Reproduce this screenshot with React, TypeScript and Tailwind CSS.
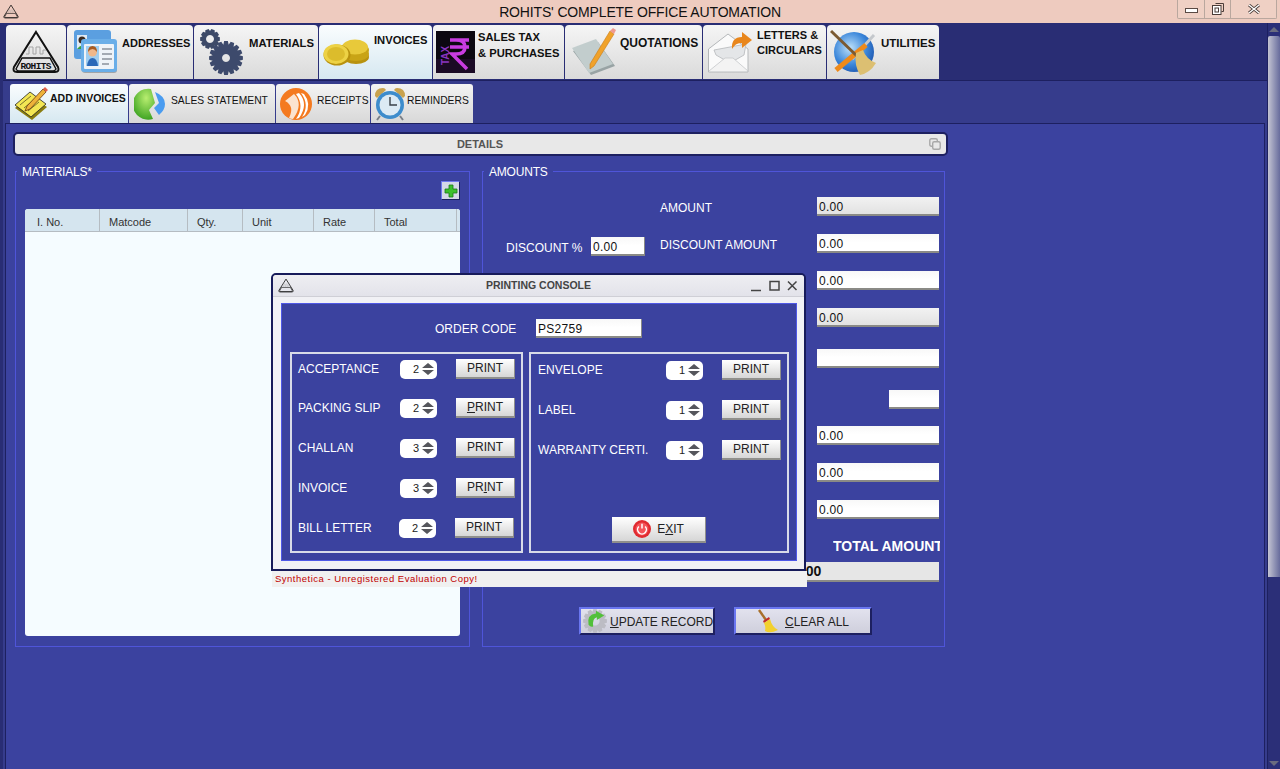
import React from 'react';

// builds a toothed gear outline for the tab and button icons
function gearPath(cx: number, cy: number, r: number, teeth: number) {
  const pts: string[] = [];
  const inner = r * 0.8;
  const step = (Math.PI * 2) / teeth;
  for (let i = 0; i < teeth; i++) {
    const a = i * step;
    [[inner, -0.5], [r, -0.28], [r, 0.28], [inner, 0.5]].forEach(([rad, off]) => {
      const t = a + off * step;
      pts.push(`${(cx + Math.cos(t) * rad).toFixed(2)} ${(cy + Math.sin(t) * rad).toFixed(2)}`);
    });
  }
  return `M${pts.join('L')}Z`;
}

function LogoIcon({ small }: { small?: boolean }) {
  return (
    <svg viewBox="0 0 50 44" className={small ? 'w-[16px] h-[15px]' : 'w-[50px] h-[44px]'}>
      <path d="M25 2 L47 37 Q49 42 44 42 L6 42 Q1 42 3 37 Z" fill="none" stroke="#111" strokeWidth={small ? 2.5 : 2} />
      <path d="M15 24 h3 v-7 h4 v7 h3 v-7 h4 v7 h3 v-4 h3" fill="none" stroke="#a5a5a5" strokeWidth="1" />
      <path d="M11 28 H39 L45 39 Q44 41 42 41 H8 Q6 41 5 39 Z" fill="none" stroke="#111" strokeWidth={small ? 2 : 1.4} />
      {!small && <text x="25" y="38.500" textAnchor="middle" fontSize="9.500" fontWeight="bold" fill="#111" fontFamily="Liberation Mono" textLength="31">ROHITS</text>}
    </svg>
  );
}

function AddressIcon() {
  return (
    <svg viewBox="0 0 44 44" className="w-[44px] h-[44px] shrink-0">
      <rect x="1" y="0" width="37" height="29" rx="3" fill="#5b9fe0" />
      <rect x="4" y="5" width="10" height="14" fill="#dfeaf5" />
      <circle cx="9" cy="10" r="3.500" fill="#3a2a20" />
      <path d="M4 19 q5 -7 10 0z" fill="#3aa040" />
      <rect x="9" y="11" width="35" height="32" rx="3" fill="#5a5f66" opacity=".45" />
      <rect x="8" y="9" width="36" height="33" rx="3" fill="#6aaee8" />
      <rect x="11" y="14" width="30" height="25" rx="1" fill="#eef3f8" />
      <rect x="13" y="16" width="13" height="20" fill="#9fcdf0" />
      <circle cx="19.500" cy="22" r="4.500" fill="#f0b78a" />
      <path d="M15 22 q0 -6 4.500 -6 q4.500 0 4.500 6 q-2 -3 -4.500 -3 q-2.500 0 -4.500 3z" fill="#a85a20" />
      <path d="M14 36 q1 -8 5.500 -8 q4.500 0 5.500 8z" fill="#2a68b8" />
      <path d="M29 19h10M29 24h10M29 29h10M29 34h7" stroke="#8a939c" strokeWidth="1.400" />
    </svg>
  );
}

function GearsIcon() {
  return (
    <svg viewBox="0 0 44 46" className="w-[44px] h-[46px] shrink-0">
      <path fillRule="evenodd" d={`${gearPath(11, 10, 10, 10)} M11 6a4 4 0 1 0 .01 0Z`} fill="#3d4a68" />
      <path fillRule="evenodd" d={`${gearPath(27, 29, 17, 16)} M27 25a4 4 0 1 0 .01 0Z`} fill="#3d4a6c" />
    </svg>
  );
}

function CoinsIcon() {
  return (
    <svg viewBox="0 0 47 28" className="w-[47px] h-[28px] mt-[2px] shrink-0">
      <ellipse cx="33" cy="18" rx="13" ry="7" fill="#b8920f" />
      <ellipse cx="33" cy="15" rx="13" ry="7" fill="#c9a416" />
      <ellipse cx="33" cy="11" rx="13" ry="7" fill="#c9a416" />
      <ellipse cx="32" cy="8" rx="13" ry="7.500" fill="#e8c93a" />
      <ellipse cx="14" cy="16" rx="13.500" ry="10.500" fill="#b8920f" />
      <ellipse cx="13" cy="15" rx="12.500" ry="10" fill="#edd245" />
      <ellipse cx="13" cy="15" rx="9" ry="7" fill="#dcbc2c" />
    </svg>
  );
}

function TaxIcon() {
  return (
    <svg viewBox="0 0 39 42" className="w-[39px] h-[42px] shrink-0">
      <rect width="39" height="42" fill="#0c0810" />
      <rect y="28" width="39" height="14" fill="#1b0a25" />
      <path d="M14 9h19M14 16h19M16 9h4q9 0 9 7t-9 7h-4l15 15" fill="none" stroke="#c83ce0" strokeWidth="3.500" />
      <text x="0" y="0" transform="translate(13 34) rotate(-90)" fontSize="10" fill="#8a34c0" fontFamily="Liberation Sans">TAX</text>
    </svg>
  );
}

function QuoteIcon() {
  return (
    <svg viewBox="0 0 44 48" className="w-[44px] h-[48px] shrink-0">
      <path d="M1 23 L26 14 L43 38 L19 47 Z" fill="#98a3a4" />
      <path d="M0 20 L24 11 L41 36 L17 45 Z" fill="#c2cdcd" />
      <path d="M38 3 L18 36 L18 41 L22 38 L42 6 Z" fill="#f0a22a" stroke="#c97b14" strokeWidth=".6" />
      <path d="M38 3 L41 0 L44 2 L42 6 Z" fill="#f09a90" />
    </svg>
  );
}

function LetterIcon() {
  return (
    <svg viewBox="0 0 44 42" className="w-[44px] h-[42px] shrink-0">
      <path d="M0.500 18 L20 3 L40 18 V41 H0.500 Z" fill="#fafafa" stroke="#b5b8ba" />
      <path d="M6 19 L38 13 L36 24 L22 32 L8 24 Z" fill="#e4e6e8" stroke="#b5b8ba" strokeWidth=".8" />
      <path d="M1 40 L17 27 H25 L40 40" fill="#f3f3f3" stroke="#c5c8ca" strokeWidth=".8" />
      <path d="M24 18 Q23 6 34 6 V1 L44 9 L34 17 V12 Q28 11 24 18 Z" fill="#e8861c" />
    </svg>
  );
}

function UtilitiesIcon() {
  return (
    <svg viewBox="0 0 48 46" className="w-[48px] h-[46px] shrink-0">
      <defs>
        <radialGradient id="globe" cx=".4" cy=".4" r=".7">
          <stop offset="0" stopColor="#bfe2fa" />
          <stop offset=".6" stopColor="#3a86da" />
          <stop offset="1" stopColor="#1a4fa8" />
        </radialGradient>
      </defs>
      <circle cx="24" cy="23" r="20" fill="url(#globe)" />
      <path d="M44 6 L22 30" stroke="#c4c8cc" strokeWidth="3" />
      <path d="M6 41 L36 16" stroke="#ee8a1a" strokeWidth="5" />
      <path d="M1 2 L28 28" stroke="#7b5a32" strokeWidth="3" />
      <path d="M26 24 L33 21 Q36 30 46 34 Q40 44 30 46 Q24 36 26 24 Z" fill="#dcbf72" />
    </svg>
  );
}

function NoteIcon() {
  return (
    <svg viewBox="0 0 34 34" className="w-[34px] h-[34px] shrink-0">
      <path d="M1 21 L16 8 L33 20 L18 33 Z" fill="#8a7d10" />
      <path d="M1 18 L16 5 L32 17 L17 30 Z" fill="#f3e654" stroke="#222" strokeWidth=".8" />
      <path d="M6 18 L17 9M10 21 L21 12M14 24 L25 15" stroke="#5a5320" strokeWidth=".8" />
      <path d="M29 2 L13 19 L11 24 L16 22 L32 5 Z" fill="#eeb23a" stroke="#6a3a10" strokeWidth=".8" />
      <path d="M29 2 L31 0 L34 3 L32 5 Z" fill="#e0604a" />
    </svg>
  );
}

function PieIcon() {
  return (
    <svg viewBox="0 0 32 34" className="w-[32px] h-[34px] shrink-0">
      <defs>
        <radialGradient id="pie" cx=".6" cy=".3" r=".8">
          <stop offset="0" stopColor="#b8ee70" />
          <stop offset="1" stopColor="#2f9a18" />
        </radialGradient>
      </defs>
      <path d="M17 2 A15.500 15.500 0 1 0 19 32 L15 23 L21 16 Z" fill="url(#pie)" />
      <path d="M21 5 Q31 9 31 17 Q31 23 25 28 L20 21 L25 16 Z" fill="#4a9cf0" />
    </svg>
  );
}

function ReceiptIcon() {
  return (
    <svg viewBox="0 0 32 32" className="w-[32px] h-[32px] shrink-0">
      <circle cx="16" cy="16" r="16" fill="#f47a20" />
      <path d="M5 13 L14 6 Q24 16 13 31 Q11 31 9 30 Q15 18 5 13Z" fill="#fbe3cf" />
      <path d="M16 6 L19 5 Q29 16 19 30 L16 31 Q25 18 16 6Z" fill="#fff" />
      <path d="M21 5 L24 6 Q32 16 25 27 L22 29 Q30 17 21 5Z" fill="#fff" />
    </svg>
  );
}

function ClockIcon() {
  return (
    <svg viewBox="0 0 32 34" className="w-[32px] h-[34px] shrink-0">
      <path d="M1 9 Q1 1 9 1 Q11 1 12 3 L3 11 Z" fill="#c9a24e" />
      <path d="M31 9 Q31 1 23 1 Q21 1 20 3 L29 11 Z" fill="#c9a24e" />
      <path d="M6 29 L3 33M26 29 L29 33" stroke="#7a8088" strokeWidth="2" />
      <circle cx="16" cy="18" r="14" fill="#3d8ccc" />
      <circle cx="16" cy="18" r="10.500" fill="#dceaf4" />
      <path d="M16 10 V18 H23" fill="none" stroke="#3a4048" strokeWidth="1.400" />
    </svg>
  );
}

function PlusIcon() {
  return (
    <svg viewBox="0 0 14 14" className="w-[14px] h-[14px]">
      <path d="M5 1h4v4h4v4H9v4H5V9H1V5h4z" fill="#3cc02c" stroke="#1a7a18" strokeWidth=".8" />
    </svg>
  );
}

function RefreshGearIcon() {
  return (
    <svg viewBox="0 0 26 26" className="w-[24px] h-[24px] shrink-0">
      <path fillRule="evenodd" d={`${gearPath(13, 13, 13, 12)} M13 8a5 5 0 1 0 .01 0Z`} fill="#bcbcc4" />
      <path d="M6 17 Q4 6 14 5 V2 L23 7 L15 12 V9 Q10 10 11 19 Q8 20 6 17Z" fill="#52c03a" />
    </svg>
  );
}

function BroomIcon() {
  return (
    <svg viewBox="0 0 20 24" className="w-[20px] h-[24px] shrink-0">
      <path d="M1 1 L8 11" stroke="#a8702c" strokeWidth="2.400" />
      <path d="M5 12 L11 8 L12 10 L6 14 Z" fill="#c02a2a" />
      <path d="M6 14 L12 10 Q14 18 20 21 Q12 25 7 22 Q8 18 6 14Z" fill="#f2d02e" />
    </svg>
  );
}

function PowerIcon() {
  return (
    <svg viewBox="0 0 18 18" className="w-[18px] h-[18px]">
      <circle cx="9" cy="9" r="9" fill="#e02a30" />
      <circle cx="9" cy="9" r="6.500" fill="#f4545a" />
      <path d="M5.800 6.500 A4.400 4.400 0 1 0 12.200 6.500" fill="none" stroke="#fff" strokeWidth="1.500" />
      <path d="M9 3.800 V8.500" stroke="#fff" strokeWidth="1.500" />
    </svg>
  );
}

function WindowControls() {
  return (
    <div className="flex h-[19px] mr-[3px] border border-t-0 border-[#b9a79e] rounded-b-[2px] bg-[#efd0c4]">
      <div className="w-[27px] flex items-center justify-center border-r border-[#b9a79e]">
        <div className="w-[13px] h-[5px] mt-[3px] bg-white border border-[#5a4a44]" />
      </div>
      <div className="w-[26px] flex items-center justify-center border-r border-[#b9a79e]">
        <svg viewBox="0 0 12 12" className="w-[12px] h-[12px]">
          <path d="M3.500 .5h8v8h-2" fill="none" stroke="#4a3c38" />
          <rect x=".5" y="2.500" width="8.500" height="9" fill="#fff" stroke="#4a3c38" />
          <rect x="3" y="5" width="3.500" height="4" fill="none" stroke="#4a3c38" />
        </svg>
      </div>
      <div className="w-[45px] flex items-center justify-center">
        <svg viewBox="0 0 12 10" className="w-[12px] h-[10px]">
          <path d="M1 1 L11 9M11 1 L1 9" stroke="#4a3c38" strokeWidth="3" />
          <path d="M1 1 L11 9M11 1 L1 9" stroke="#fff" strokeWidth="1.400" />
        </svg>
      </div>
    </div>
  );
}

function MainTab({ className, active, children }: { className: string; active?: boolean; children: React.ReactNode }) {
  return (
    <div
      className={`${className} h-[54px] shrink-0 flex items-center rounded-t-[4px] font-bold text-[#111] leading-[16px] whitespace-nowrap ${
        active ? 'bg-gradient-to-b from-[#fafdfe] to-[#d6e8f1]' : 'bg-gradient-to-b from-[#f5f5f5] to-[#dadada]'
      }`}
    >
      {children}
    </div>
  );
}

function SubTab({ className, active, children }: { className: string; active?: boolean; children: React.ReactNode }) {
  return (
    <div
      className={`${className} h-[39px] shrink-0 flex items-center rounded-t-[3px] text-[#111] whitespace-nowrap ${
        active ? 'text-[10.500px] font-bold bg-gradient-to-b from-[#fafdfe] to-[#d6e8f1]' : 'text-[10.300px] bg-gradient-to-b from-[#f3f3f3] to-[#d8d8d8]'
      }`}
    >
      {children}
    </div>
  );
}

function Field({ value, readOnly, className }: { value?: string; readOnly?: boolean; className: string }) {
  return (
    <div
      className={`${className} h-[19px] pl-[2px] border-b-2 border-[#8a8a86] text-[12px] leading-[20px] tracking-[0.3px] text-[#111] shrink-0 ${
        readOnly ? 'bg-gradient-to-b from-[#f2f2f2] to-[#e2e2e2]' : 'bg-gradient-to-b from-[#f8f8f8] via-white to-white'
      }`}
    >
      {value}
    </div>
  );
}

function Spinner({ value, className }: { value: number; className?: string }) {
  return (
    <div className={`${className ?? ''} w-[37px] h-[19px] shrink-0 flex items-center justify-end pr-[3px] gap-[3px] bg-white rounded-[5px] text-[11px] text-[#222]`}>
      <span>{value}</span>
      <svg viewBox="0 0 12 14" className="w-[12px] h-[14px]">
        <path d="M6 1 L12 6 H0 Z M0 8 H12 L6 13 Z" fill="#55565c" />
      </svg>
    </div>
  );
}

function PrintButton({ under, className }: { under?: number; className?: string }) {
  const word = 'PRINT';
  return (
    <div className={`${className ?? ''} w-[59px] h-[20px] shrink-0 flex items-center justify-center bg-gradient-to-b from-white to-[#d6d6d6] border-b-2 border-r border-[#8f8f8c] text-[12px] text-[#222]`}>
      {word.split('').map((c, i) => (
        <span key={i} className={i === under ? 'underline' : ''}>{c}</span>
      ))}
    </div>
  );
}

function ConsoleRow({ label, value, under, className, labelClass, shift }: {
  label: string; value: number; under?: number; className?: string; labelClass: string; shift?: boolean;
}) {
  return (
    <div className={`${className ?? ''} h-[20px] flex items-center`}>
      <span className={`${labelClass} shrink-0 whitespace-nowrap text-[12px] text-white`}>{label}</span>
      <Spinner value={value} className={shift ? '-ml-[1px]' : ''} />
      <PrintButton under={under} className="ml-[19px]" />
    </div>
  );
}

function PrintingConsole() {
  return (
    <div className="absolute left-[271px] top-[273px] w-[536px]">
      <div className="w-[535px] h-[298px] flex flex-col border-2 border-[#171b5a] rounded-t-[5px] bg-[#f1f1f5]">
        <div className="h-[22px] shrink-0 flex items-center bg-gradient-to-b from-[#eeeef2] to-[#e3e3ea] border-b border-[#cfcfd6] rounded-t-[4px] pl-[5px] pr-[2px]">
          <LogoIcon small />
          <span className="flex-1 pl-[33px] text-center text-[10.500px] font-bold text-[#444]">PRINTING CONSOLE</span>
          <svg viewBox="0 0 52 12" className="w-[52px] h-[12px]">
            <path d="M1 10.500h10" stroke="#444" strokeWidth="1.500" />
            <rect x="20" y="1.500" width="9" height="8.500" fill="none" stroke="#444" strokeWidth="1.500" />
            <path d="M38 1.500l8.500 8.500M46.500 1.500L38 10" stroke="#444" strokeWidth="1.500" />
          </svg>
        </div>
        <div className="mt-[6px] ml-[8px] w-[516px] h-[258px] bg-[#3b429f] border border-[#4f58e6] flex flex-col pl-[8px]">
          <div className="mt-[15px] flex items-center">
            <span className="ml-[145px] w-[101px] text-[12px] text-white">ORDER CODE</span>
            <Field value="PS2759" className="w-[106px] border-r border-r-[#8a8a86]" />
          </div>
          <div className="mt-[14px] flex gap-[6px]">
            <div className="w-[233px] h-[201px] border-2 border-[#d8dbe8] pt-[5px] pl-[6px] flex flex-col">
              <ConsoleRow label="ACCEPTANCE" value={2} labelClass="w-[102px]" />
              <ConsoleRow label="PACKING SLIP" value={2} under={0} labelClass="w-[102px]" className="mt-[19px]" />
              <ConsoleRow label="CHALLAN" value={3} labelClass="w-[102px]" className="mt-[20px]" />
              <ConsoleRow label="INVOICE" value={3} under={2} labelClass="w-[102px]" className="mt-[20px]" />
              <ConsoleRow label="BILL LETTER" value={2} labelClass="w-[102px]" className="mt-[20px]" shift />
            </div>
            <div className="w-[260px] h-[201px] border-2 border-[#d8dbe8] pt-[6px] pl-[7px] flex flex-col">
              <ConsoleRow label="ENVELOPE" value={1} labelClass="w-[128px]" />
              <ConsoleRow label="LABEL" value={1} labelClass="w-[128px]" className="mt-[20px]" />
              <ConsoleRow label="WARRANTY CERTI." value={1} labelClass="w-[128px]" className="mt-[20px]" />
              <div className="mt-[57px] ml-[74px] w-[94px] h-[26px] flex items-center justify-center gap-[6px] bg-gradient-to-b from-white to-[#d6d6d6] border-b-2 border-r border-[#8f8f8c] text-[12px] text-[#222]">
                <PowerIcon />
                <span><span>E</span><span className="underline">X</span><span>IT</span></span>
              </div>
            </div>
          </div>
        </div>
      </div>
      <div className="ml-[1px] h-[16px] bg-[#f0f0f0] pl-[3px] text-[9.500px] leading-[15px] tracking-[0.5px] text-[#c00000]">
        Synthetica - Unregistered Evaluation Copy!
      </div>
    </div>
  );
}

function AmountRow({ label, left, value, readOnly, fieldClass, className }: {
  label?: string; left?: boolean; value?: string; readOnly?: boolean; fieldClass?: string; className?: string;
}) {
  return (
    <div className={`${className ?? ''} flex h-[19px]`}>
      <div className="w-[177px] shrink-0 flex items-start">
        {left && (
          <>
            <span className="ml-[23px] mt-[5px] w-[85px] text-[12px] text-white whitespace-nowrap">DISCOUNT %</span>
            <Field value="0.00" className="mt-[3px] w-[54px] border-r border-r-[#8a8a86]" />
          </>
        )}
      </div>
      <span className="w-[157px] shrink-0 text-[12px] leading-[22px] text-white">{label}</span>
      <div className="w-[122px] shrink-0 flex justify-end">
        <Field value={value} readOnly={readOnly} className={fieldClass ?? 'w-[122px]'} />
      </div>
    </div>
  );
}

const columns = [
  { name: 'I. No.', cls: 'w-[75px] pl-[12px]' },
  { name: 'Matcode', cls: 'w-[88px] pl-[9px]' },
  { name: 'Qty.', cls: 'w-[55px] pl-[9px]' },
  { name: 'Unit', cls: 'w-[71px] pl-[9px]' },
  { name: 'Rate', cls: 'w-[61px] pl-[9px]' },
  { name: 'Total', cls: 'w-[82px] pl-[9px]' },
];

export default function App() {
  return (
    <div className="relative w-full h-[769px] overflow-hidden flex flex-col bg-[#292d74] [font-family:'Liberation_Sans',Arial,sans-serif]">
      {/* Title bar */}
      <div className="h-[23px] shrink-0 flex items-start justify-between bg-[#eecbbf]">
        <div className="mt-[4px] ml-[3px]"><LogoIcon small /></div>
        <span className="absolute left-0 right-0 top-[3px] text-center text-[14px] leading-[18px] tracking-[-0.15px] text-[#111]">ROHITS' COMPLETE OFFICE AUTOMATION</span>
        <WindowControls />
      </div>

      <div className="flex-1 flex min-h-0">
        <div className="flex-1 flex flex-col min-w-0">
          {/* Main tabs */}
          <div className="mt-[2px] ml-[6px] flex gap-[1px]">
            <MainTab className="w-[60px] justify-center"><LogoIcon /></MainTab>
            <MainTab className="w-[126px] pl-[6px] gap-[5px]"><AddressIcon /><span className="mb-[18px] text-[11px]">ADDRESSES</span></MainTab>
            <MainTab className="w-[124px] pl-[5px] gap-[6px]"><GearsIcon /><span className="mb-[18px] text-[11.300px]">MATERIALS</span></MainTab>
            <MainTab className="w-[113px] pl-[4px] gap-[4px]" active><CoinsIcon /><span className="mb-[24px] text-[11.200px]">INVOICES</span></MainTab>
            <MainTab className="w-[131px] pl-[3px] gap-[3px]"><TaxIcon /><span className="mb-[14px] text-[11.200px]">SALES TAX<br />&amp; PURCHASES</span></MainTab>
            <MainTab className="w-[137px] pl-[7px] gap-[4px]"><QuoteIcon /><span className="mb-[18px] text-[12px]">QUOTATIONS</span></MainTab>
            <MainTab className="w-[123px] pl-[5px] gap-[5px]"><LetterIcon /><span className="mb-[19px] text-[11px] leading-[15px]">LETTERS &amp;<br />CIRCULARS</span></MainTab>
            <MainTab className="w-[112px] pl-[3px] gap-[3px]"><UtilitiesIcon /><span className="mb-[18px] text-[11.500px]">UTILITIES</span></MainTab>
          </div>

          {/* Tab body */}
          <div className="flex-1 mt-[1px] ml-[3px] flex flex-col border-t border-[#1d2060] bg-[#363c8c] pt-[3px]">
            <div className="ml-[7px] flex gap-[1px]">
              <SubTab className="w-[118px] pl-[4px] gap-[2px]" active><NoteIcon /><span className="mb-[9px]">ADD INVOICES</span></SubTab>
              <SubTab className="w-[146px] pl-[5px] gap-[5px]"><PieIcon /><span className="mb-[5px]">SALES STATEMENT</span></SubTab>
              <SubTab className="w-[94px] pl-[4px] gap-[5px]"><ReceiptIcon /><span className="mb-[5px]">RECEIPTS</span></SubTab>
              <SubTab className="w-[102px] pl-[3px] gap-[1px]"><ClockIcon /><span className="mb-[5px]">REMINDERS</span></SubTab>
            </div>

            <div className="flex-1 ml-[2px] mr-[2px] border-t border-l border-r border-[#1d2060] bg-[#3b429f] pt-[8px] pl-[7px]">
              {/* Details bar */}
              <div className="w-[935px] h-[24px] flex items-center border-2 border-[#1d2060] rounded-[5px] bg-[#e8e8e8] pl-[16px] pr-[5px]">
                <span className="flex-1 text-center text-[11px] font-bold text-[#555]">DETAILS</span>
                <svg viewBox="0 0 12 12" className="w-[12px] h-[12px]">
                  <rect x=".8" y=".8" width="7.500" height="7.500" rx="1.500" fill="none" stroke="#a8a8a8" strokeWidth="1.400" />
                  <rect x="3.700" y="3.700" width="7.500" height="7.500" rx="1.500" fill="#e8e8e8" stroke="#a8a8a8" strokeWidth="1.400" />
                </svg>
              </div>

              <div className="mt-[8px] ml-[2px] flex gap-[12px]">
                {/* Materials */}
                <fieldset className="w-[455px] h-[483px] border border-[#4f55d9] pl-[9px] pr-[9px]">
                  <legend className="-ml-[8px] px-[5px] translate-y-[1px] text-[12px] leading-[14px] tracking-[-0.2px] text-white">MATERIALS*</legend>
                  <div className="mt-[3px] flex justify-end">
                    <div className="w-[19px] h-[19px] flex items-center justify-center bg-[#d4d8e8] border border-t-[#7078f0] border-l-[#7078f0] border-r-[#1d2060] border-b-[#1d2060]">
                      <PlusIcon />
                    </div>
                  </div>
                  <div className="mt-[9px] h-[427px] flex flex-col rounded-[3px] bg-[#f5fcff] overflow-hidden">
                    <div className="h-[23px] shrink-0 flex items-center bg-[#d5e5ef] border-b border-[#b5bcc2] text-[11px] text-[#333]">
                      {columns.map((col) => (
                        <div key={col.name} className={`${col.cls} h-full pt-[4px] flex items-center border-r border-[#b5bcc2]`}>{col.name}</div>
                      ))}
                    </div>
                  </div>
                </fieldset>

                {/* Amounts */}
                <fieldset className="w-[463px] h-[483px] border border-[#4f55d9]">
                  <legend className="ml-[1px] px-[5px] translate-y-[1px] text-[12px] leading-[14px] tracking-[-0.2px] text-white">AMOUNTS</legend>
                  <div className="pt-[19px] flex flex-col">
                    <AmountRow label="AMOUNT" value="0.00" readOnly />
                    <AmountRow label="DISCOUNT AMOUNT" value="0.00" left className="mt-[18px]" />
                    <AmountRow value="0.00" className="mt-[18px]" />
                    <AmountRow value="0.00" readOnly className="mt-[18px]" />
                    <AmountRow className="mt-[22px]" />
                    <AmountRow fieldClass="w-[50px]" className="mt-[22px]" />
                    <AmountRow value="0.00" className="mt-[17px]" />
                    <AmountRow value="0.00" className="mt-[18px]" />
                    <AmountRow value="0.00" className="mt-[18px]" />
                    <div className="mt-[19px] ml-[350px] w-[107px] h-[16px] overflow-hidden whitespace-nowrap text-[14px] leading-[16px] font-bold text-white">TOTAL AMOUNT</div>
                    <div className="mt-[8px] ml-[307px] w-[149px] h-[20px] pl-[4px] border-b-2 border-[#8a8a86] bg-[#e6e6e6] text-[14px] font-bold leading-[18px] text-[#111]">0.00</div>
                    <div className="mt-[25px] ml-[96px] flex gap-[19px]">
                      <div className="w-[136px] h-[28px] flex items-center pl-[2px] gap-[3px] border-2 border-t-[#6a76f0] border-l-[#6a76f0] border-r-[#1d2060] border-b-[#1d2060] bg-gradient-to-b from-[#e2e2ee] to-[#cfcfdc] text-[12px] text-[#222] whitespace-nowrap">
                        <RefreshGearIcon />
                        <span className="pt-[2px]"><span className="underline">U</span>PDATE RECORD</span>
                      </div>
                      <div className="w-[138px] h-[28px] flex items-center pl-[22px] gap-[7px] border-2 border-t-[#6a76f0] border-l-[#6a76f0] border-r-[#1d2060] border-b-[#1d2060] bg-gradient-to-b from-[#e2e2ee] to-[#cfcfdc] text-[12px] text-[#222] whitespace-nowrap">
                        <BroomIcon />
                        <span className="pt-[2px]"><span className="underline">C</span>LEAR ALL</span>
                      </div>
                    </div>
                  </div>
                </fieldset>
              </div>
            </div>
          </div>
        </div>

        {/* Scrollbar */}
        <div className="w-[13px] shrink-0 flex flex-col items-center border-l border-[#1d2060] bg-[#2b2f78]">
          <svg viewBox="0 0 10 5" className="w-[10px] h-[5px] mt-[4px]"><path d="M5 0 L10 5 H0 Z" fill="#6a6c80" /></svg>
          <div className="mt-[4px] w-full h-[541px] rounded-t-[2px] bg-gradient-to-r from-[#c4c4d2] to-[#686c9c]" />
          <div className="flex-1" />
          <svg viewBox="0 0 10 5" className="w-[10px] h-[5px] mb-[3px]"><path d="M0 0 H10 L5 5 Z" fill="#6a6c80" /></svg>
        </div>
      </div>

      <PrintingConsole />
    </div>
  );
}
